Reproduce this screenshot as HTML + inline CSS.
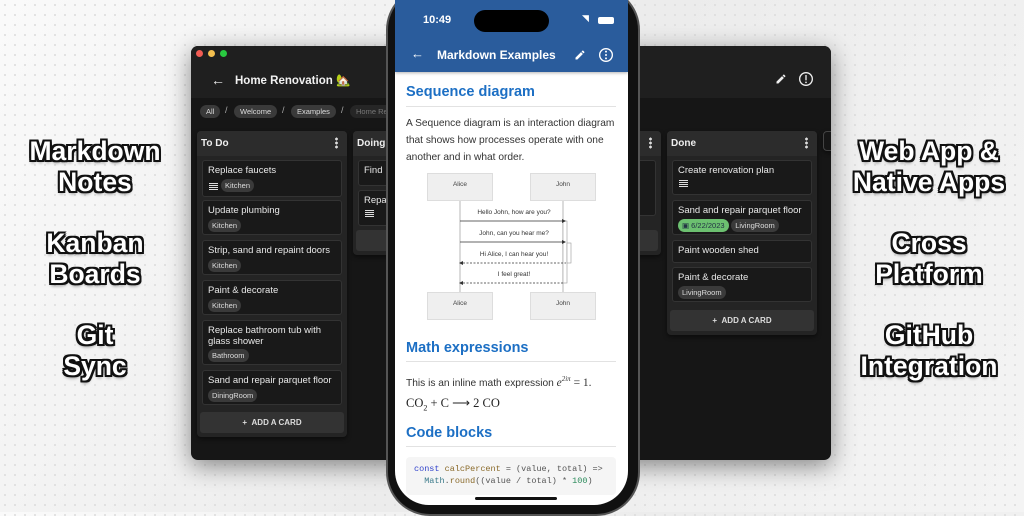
<!DOCTYPE html>
<html><head><meta charset="utf-8">
<style>
*{box-sizing:border-box;margin:0;padding:0}
body{width:1024px;height:512px;overflow:hidden;position:relative;font-family:"Liberation Sans",sans-serif;
background:radial-gradient(circle,#dcdcdc 0.8px,transparent 1.1px) 0 0/10px 10px,linear-gradient(120deg,#fafafa 0%,#ececec 50%,#f4f4f4 100%);}
.lab{position:absolute;width:200px;text-align:center;font-weight:bold;font-size:26.5px;line-height:31px;color:#fff;
text-shadow:-2px -2px 0 #111,2px -2px 0 #111,-2px 2px 0 #111,2px 2px 0 #111,0 2px 0 #111,0 -2px 0 #111,2px 0 0 #111,-2px 0 0 #111,0 3px 3px rgba(0,0,0,.4)}
.win{position:absolute;left:191px;top:46px;width:640px;height:414px;background:#161616;border-radius:7px;box-shadow:0 6px 24px rgba(0,0,0,.45);overflow:hidden}
.top{position:absolute;left:0;top:0;width:640px;height:52px;background:#1f1f1f}
.dot{position:absolute;top:4px;width:7px;height:7px;border-radius:50%}
.col{position:absolute;background:#242424;border-radius:4px;box-shadow:0 2px 4px rgba(0,0,0,.5)}
.ch{height:25px;background:#2c2c2c;color:#eee;font-weight:bold;font-size:10px;padding:7px 4px;position:relative;border-radius:4px 4px 0 0}
.km{position:absolute;right:9px;top:6px;width:3px;height:12px;background:radial-gradient(circle,#ddd 1.3px,transparent 1.5px) 0 0/3px 4px}
.card{position:absolute;left:5px;width:140px;background:#191919;border:1px solid #333;border-radius:3px;color:#e8e8e8;font-size:9.5px;padding:5px 5px;line-height:10.5px}
.tag{display:inline-block;background:#3a3a3a;color:#ddd;border-radius:7px;font-size:7.5px;padding:2px 4px;margin-top:2px;line-height:9px}
.ico{display:inline-block;width:9px;height:7px;vertical-align:middle;margin:3px 3px 0 1px;background:repeating-linear-gradient(#ddd 0 1px,transparent 1px 2px)}
.add{position:absolute;left:3px;width:144px;height:21px;background:#333;border-radius:3px;color:#ddd;font-size:8px;font-weight:bold;text-align:center;line-height:21px}
.bc{position:absolute;top:59px;height:13px;border-radius:7px;background:#3a3a3a;color:#ddd;font-size:7.5px;line-height:13px;padding:0 6px}
.sl{position:absolute;top:59px;color:#aaa;font-size:9px}
.phone{position:absolute;left:386px;top:-14px;width:254px;height:530px;background:#111;border-radius:44px;border:2px solid #555}
.screen{position:absolute;left:395px;top:0;width:233px;height:505px;background:#fff;border-radius:0 0 34px 34px;overflow:hidden}
.h{color:#1c6fc4;font-weight:bold;font-size:14.5px;position:absolute;left:11px}
.hr{position:absolute;left:11px;width:210px;height:1px;background:#e2e2e2}
.p{position:absolute;left:11px;color:#333;font-size:10.2px;line-height:17px}
.sb{position:absolute;width:66px;height:28px;background:#efefef;border:1px solid #ddd;font-size:6.5px;color:#444;text-align:center;line-height:22px}
.msg{position:absolute;font-size:6.5px;color:#333;width:110px;text-align:center;left:64px}
</style></head><body>

<div class="lab" style="left:-5px;top:136px">Markdown<br>Notes</div>
<div class="lab" style="left:-5px;top:228px">Kanban<br>Boards</div>
<div class="lab" style="left:-5px;top:320px">Git<br>Sync</div>
<div class="lab" style="left:829px;top:136px">Web App &amp;<br>Native Apps</div>
<div class="lab" style="left:829px;top:228px">Cross<br>Platform</div>
<div class="lab" style="left:829px;top:320px">GitHub<br>Integration</div>

<div class="win">
 <div class="top"></div>
 <div class="dot" style="left:5px;background:#f25c54"></div>
 <div class="dot" style="left:17px;background:#f4bf4f"></div>
 <div class="dot" style="left:29px;background:#29c940"></div>
 <div style="position:absolute;left:20px;top:26px;color:#eee;font-size:14px">&#8592;</div>
 <div style="position:absolute;left:44px;top:27px;color:#f2f2f2;font-size:11.5px;font-weight:bold">Home Renovation 🏡</div>
 <svg style="position:absolute;left:584px;top:27px" width="12" height="12" viewBox="0 0 24 24"><path d="M3 17.25V21h3.75L17.81 9.94l-3.75-3.75L3 17.25zM20.71 7.04a1 1 0 000-1.41l-2.34-2.34a1 1 0 00-1.41 0l-1.83 1.83 3.75 3.75 1.83-1.83z" fill="#eee"/></svg>
 <svg style="position:absolute;left:607px;top:25px" width="16" height="16" viewBox="0 0 24 24"><circle cx="12" cy="12" r="9.5" fill="none" stroke="#eee" stroke-width="2"/><rect x="11" y="6" width="2" height="8" fill="#eee"/><circle cx="12" cy="17" r="1.3" fill="#eee"/></svg>
 <div class="bc" style="left:9px">All</div><div class="sl" style="left:34px">/</div>
 <div class="bc" style="left:43px">Welcome</div><div class="sl" style="left:91px">/</div>
 <div class="bc" style="left:100px">Examples</div><div class="sl" style="left:150px">/</div>
 <div class="bc" style="left:159px;color:#777;background:#262626">Home Renovation</div>

 <div class="col" style="left:6px;top:85px;width:150px;height:306px">
  <div class="ch">To Do<div class="km"></div></div>
  <div class="card" style="top:29px;height:37px">Replace faucets<br><span class="ico"></span><span class="tag">Kitchen</span></div>
  <div class="card" style="top:69px;height:35px">Update plumbing<br><span class="tag">Kitchen</span></div>
  <div class="card" style="top:109px;height:35px">Strip, sand and repaint doors<br><span class="tag">Kitchen</span></div>
  <div class="card" style="top:149px;height:35px">Paint &amp; decorate<br><span class="tag">Kitchen</span></div>
  <div class="card" style="top:189px;height:45px">Replace bathroom tub with glass shower<br><span class="tag">Bathroom</span></div>
  <div class="card" style="top:239px;height:35px">Sand and repair parquet floor<br><span class="tag">DiningRoom</span></div>
  <div class="add" style="top:281px">+&nbsp;&nbsp;ADD A CARD</div>
 </div>
 <div class="col" style="left:162px;top:85px;width:150px;height:124px">
  <div class="ch">Doing</div>
  <div class="card" style="top:29px;height:26px">Find</div>
  <div class="card" style="top:59px;height:36px">Repa<br><span class="ico"></span></div>
  <div class="add" style="top:99px"></div>
 </div>
 <div class="col" style="left:380px;top:85px;width:90px;height:124px">
  <div class="ch"><div class="km"></div></div>
  <div class="card" style="top:29px;height:56px;width:80px"></div>
  <div class="add" style="top:99px;width:84px"></div>
 </div>
 <div class="col" style="left:476px;top:85px;width:150px;height:204px">
  <div class="ch">Done<div class="km"></div></div>
  <div class="card" style="top:29px;height:35px">Create renovation plan<br><span class="ico"></span></div>
  <div class="card" style="top:69px;height:35px">Sand and repair parquet floor<br><span class="tag" style="background:#6cc070;color:#234">▣ 6/22/2023</span> <span class="tag">LivingRoom</span></div>
  <div class="card" style="top:109px;height:23px">Paint wooden shed</div>
  <div class="card" style="top:136px;height:35px">Paint &amp; decorate<br><span class="tag">LivingRoom</span></div>
  <div class="add" style="top:179px">+&nbsp;&nbsp;ADD A CARD</div>
 </div>
 <div class="col" style="left:632px;top:85px;width:20px;height:20px;border:1px solid #444;background:#161616"></div>
</div>

<div class="phone"></div>
<div class="screen">
 <div style="position:absolute;left:0;top:0;width:233px;height:72px;background:#2a5c9c;box-shadow:0 1px 3px rgba(0,0,0,.3)"></div>
 <div style="position:absolute;left:28px;top:14px;color:#fff;font-size:11px;font-weight:bold">10:49</div>
 <div style="position:absolute;left:79px;top:10px;width:75px;height:22px;background:#000;border-radius:11px"></div>
 <div style="position:absolute;left:187px;top:13px;color:#fff;font-size:9px">◥</div>
 <div style="position:absolute;left:203px;top:17px;width:16px;height:7px;background:#fff;border-radius:2px"></div>
 <div style="position:absolute;left:16px;top:46px;color:#fff;font-size:13px">&#8592;</div>
 <div style="position:absolute;left:42px;top:48px;color:#fff;font-size:12px;font-weight:bold">Markdown Examples</div>
 <svg style="position:absolute;left:179px;top:49px" width="12" height="12" viewBox="0 0 24 24"><path d="M3 17.25V21h3.75L17.81 9.94l-3.75-3.75L3 17.25zM20.71 7.04a1 1 0 000-1.41l-2.34-2.34a1 1 0 00-1.41 0l-1.83 1.83 3.75 3.75 1.83-1.83z" fill="#fff"/></svg>
 <svg style="position:absolute;left:203px;top:47px" width="16" height="16" viewBox="0 0 24 24"><circle cx="12" cy="12" r="9.5" fill="none" stroke="#fff" stroke-width="2"/><circle cx="12" cy="7" r="1.5" fill="#fff"/><circle cx="12" cy="12" r="1.5" fill="#fff"/><circle cx="12" cy="17" r="1.5" fill="#fff"/></svg>

 <div class="h" style="top:84px">Sequence diagram</div>
 <div class="hr" style="top:106px"></div>
 <div class="p" style="top:115px">A Sequence diagram is an interaction diagram<br>that shows how processes operate with one<br>another and in what order.</div>
 <div class="sb" style="left:32px;top:173px">Alice</div>
 <div class="sb" style="left:135px;top:173px">John</div>
 <div class="sb" style="left:32px;top:292px">Alice</div>
 <div class="sb" style="left:135px;top:292px">John</div>
 <svg style="position:absolute;left:0;top:0" width="233" height="330">
  <line x1="65" y1="201" x2="65" y2="292" stroke="#999" stroke-width=".7"/>
  <line x1="168" y1="201" x2="168" y2="292" stroke="#999" stroke-width=".7"/>
  <rect x="168" y="221" width="4" height="62" fill="#fff" stroke="#999" stroke-width=".6"/>
  <rect x="172" y="243" width="4" height="20" fill="#fff" stroke="#999" stroke-width=".6"/>
  <line x1="65" y1="221" x2="167" y2="221" stroke="#333" stroke-width=".8"/><path d="M167 219l4 2-4 2z" fill="#333"/>
  <line x1="65" y1="242" x2="167" y2="242" stroke="#333" stroke-width=".8"/><path d="M167 240l4 2-4 2z" fill="#333"/>
  <line x1="68" y1="263" x2="171" y2="263" stroke="#333" stroke-width=".8" stroke-dasharray="2 1.5"/><path d="M68 261l-4 2 4 2z" fill="#333"/>
  <line x1="68" y1="283" x2="168" y2="283" stroke="#333" stroke-width=".8" stroke-dasharray="2 1.5"/><path d="M68 281l-4 2 4 2z" fill="#333"/>
 </svg>
 <div class="msg" style="top:209px">Hello John, how are you?</div>
 <div class="msg" style="top:230px">John, can you hear me?</div>
 <div class="msg" style="top:251px">Hi Alice, I can hear you!</div>
 <div class="msg" style="top:271px">I feel great!</div>

 <div class="h" style="top:340px">Math expressions</div>
 <div class="hr" style="top:361px"></div>
 <div class="p" style="top:371px">This is an inline math expression <span style="font-family:'Liberation Serif',serif;font-size:11.5px;font-style:italic">e<sup style="font-size:7px">2iπ</sup></span><span style="font-family:'Liberation Serif',serif;font-size:11.5px"> = 1.</span></div>
 <div class="p" style="top:395px;font-family:'Liberation Serif',serif;font-size:12.5px;color:#222">CO<sub style="font-size:8px">2</sub> + C ⟶ 2 CO</div>
 <div class="h" style="top:425px">Code blocks</div>
 <div class="hr" style="top:446px"></div>
 <div style="position:absolute;left:11px;top:457px;width:210px;height:38px;background:#f5f5f5;border-radius:4px;font-family:'Liberation Mono',monospace;font-size:8.5px;line-height:12px;padding:6px 8px;color:#555;white-space:pre"><span style="color:#3344cc">const</span> <span style="color:#8a6a2a">calcPercent</span> = (value, total) =>
  <span style="color:#3a7a8a">Math</span>.<span style="color:#8a6a2a">round</span>((value / total) * <span style="color:#2a8a5a">100</span>)</div>
 <div style="position:absolute;left:80px;top:497px;width:82px;height:3px;background:#111;border-radius:2px"></div>
</div>
</body></html>
